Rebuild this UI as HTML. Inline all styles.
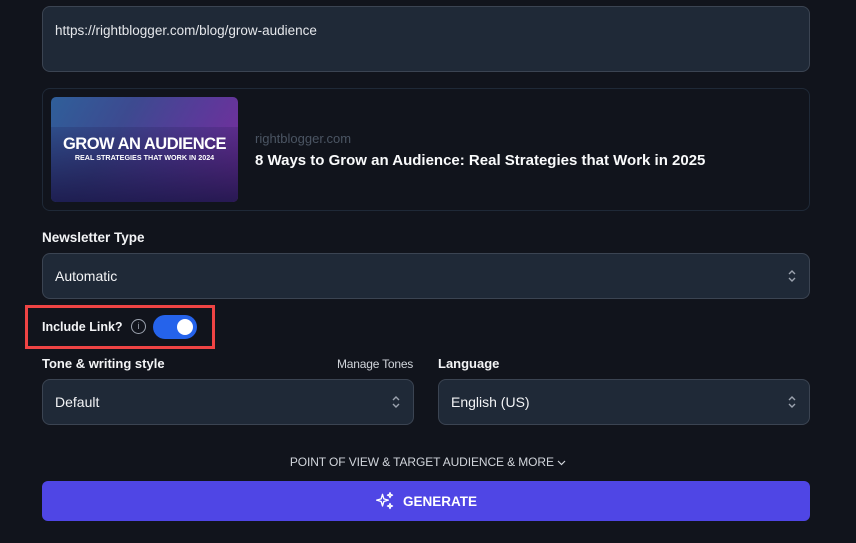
<!DOCTYPE html>
<html><head><style>
body{margin:0;width:856px;height:543px;background:#11141c;font-family:"Liberation Sans",sans-serif;color:#fff;position:relative;overflow:hidden}
.a{position:absolute}
.box{background:#1f2937;border:1px solid #3b4452;border-radius:8px;box-sizing:border-box}
.lbl{font-size:13.5px;font-weight:bold;color:#f3f4f6}
.sel{font-size:14px;color:#f3f4f6;display:flex;align-items:center;padding-left:12px}
.chev{position:absolute;right:12px;top:50%;margin-top:-8px}
</style></head><body>
<div class="a box" style="left:42px;top:6px;width:768px;height:66px;font-size:13.5px;padding:16px 12px;color:#e5e7eb">https://rightblogger.com/blog/grow-audience</div>
<div class="a" style="left:42px;top:88px;width:768px;height:123px;border:1px solid #1f2937;border-radius:8px;box-sizing:border-box"></div>
<div class="a" style="left:51px;top:97px;width:187px;height:105px;border-radius:5px;background:linear-gradient(120deg,#2f5f9a 0%,#3d4a90 35%,#5a3a9a 65%,#7d2a9c 100%);overflow:hidden">
<div class="a" style="left:0;top:30px;width:187px;height:75px;background:linear-gradient(rgba(30,25,80,0.2),rgba(25,22,70,0.85))"></div>
<div class="a" style="left:0;top:38px;width:187px;text-align:center;font-weight:bold;font-size:16.5px;letter-spacing:-0.5px">GROW AN AUDIENCE</div>
<div class="a" style="left:0;top:56px;width:187px;text-align:center;font-weight:bold;font-size:7.2px">REAL STRATEGIES THAT WORK IN 2024</div>
</div>
<div class="a" style="left:255px;top:131px;font-size:13px;color:#4b5563">rightblogger.com</div>
<div class="a" style="left:255px;top:152px;font-size:15px;font-weight:bold;color:#f9fafb">8 Ways to Grow an Audience: Real Strategies that Work in 2025</div>
<div class="a lbl" style="left:42px;top:230px">Newsletter Type</div>
<div class="a box sel" style="left:42px;top:253px;width:768px;height:46px">Automatic<svg class="chev" width="10" height="16" viewBox="0 0 10 16"><path d="M2 6l3-3 3 3M2 10l3 3 3-3" stroke="#9ca3af" stroke-width="1.4" fill="none"/></svg></div>
<div class="a" style="left:25px;top:305px;width:190px;height:44px;border:3px solid #ef4444;box-sizing:border-box"></div>
<div class="a lbl" style="left:42px;top:320px;font-size:12.5px">Include Link?</div>
<div class="a" style="left:131px;top:319px;width:15px;height:15px;border:1.3px solid #9ca3af;border-radius:50%;box-sizing:border-box;font-size:9px;color:#9ca3af;text-align:center;line-height:13px">i</div>
<div class="a" style="left:153px;top:315px;width:44px;height:24px;background:#2563eb;border-radius:12px"><div class="a" style="left:24px;top:4px;width:16px;height:16px;border-radius:50%;background:#fff"></div></div>
<div class="a lbl" style="left:42px;top:356px;font-size:13px">Tone &amp; writing style</div>
<div class="a" style="left:337px;top:357px;font-size:12px;color:#d1d5db;letter-spacing:-0.2px">Manage Tones</div>
<div class="a lbl" style="left:438px;top:356px;font-size:13px">Language</div>
<div class="a box sel" style="left:42px;top:379px;width:372px;height:46px">Default<svg class="chev" width="10" height="16" viewBox="0 0 10 16"><path d="M2 6l3-3 3 3M2 10l3 3 3-3" stroke="#9ca3af" stroke-width="1.4" fill="none"/></svg></div>
<div class="a box sel" style="left:438px;top:379px;width:372px;height:46px">English (US)<svg class="chev" width="10" height="16" viewBox="0 0 10 16"><path d="M2 6l3-3 3 3M2 10l3 3 3-3" stroke="#9ca3af" stroke-width="1.4" fill="none"/></svg></div>
<div class="a" style="left:0;width:856px;top:455px;text-align:center;font-size:12px;color:#d1d5db;letter-spacing:-0.1px">POINT OF VIEW &amp; TARGET AUDIENCE &amp; MORE <svg width="9" height="6" viewBox="0 0 9 6"><path d="M1 1l3.5 3.5L8 1" stroke="#d1d5db" stroke-width="1.2" fill="none"/></svg></div>
<div class="a" style="left:42px;top:481px;width:768px;height:40px;background:#4f46e5;border-radius:6px;display:flex;align-items:center;justify-content:center;font-size:13.5px;font-weight:bold">
<svg width="20" height="20" viewBox="0 0 24 24" style="margin-right:8px"><path d="M9 4l1.6 5.4L16 11l-5.4 1.6L9 18l-1.6-5.4L2 11l5.4-1.6z M18 2l.8 2.2L21 5l-2.2.8L18 8l-.8-2.2L15 5l2.2-.8z M18 15l.8 2.2L21 18l-2.2.8L18 21l-.8-2.2L15 18l2.2-.8z" fill="none" stroke="#fff" stroke-width="1.6" stroke-linejoin="round"/></svg>GENERATE</div>
</body></html>
